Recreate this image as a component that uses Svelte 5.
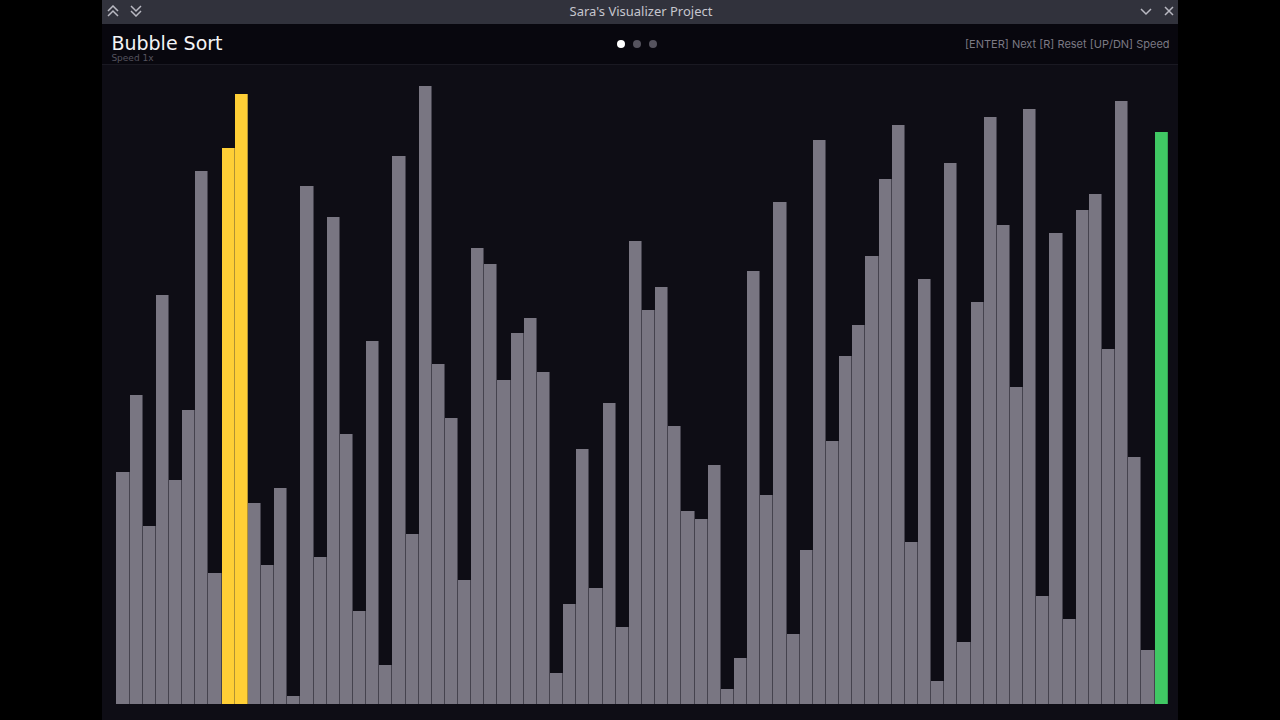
<script lang="ts">
  type BarState = 'idle' | 'compare' | 'sorted';

  const algorithm = 'Bubble Sort';
  const pages = 3;
  const minSpeed = 1;
  const maxSpeed = 16;

  let page = $state(0);
  let speed = $state(1);

  // Current order of the array, values 1..80
  const values = [
    30, 40, 23, 53, 29, 38, 69, 17, 72, 79, 26, 18, 28, 1, 67, 19,
    63, 35, 12, 47, 5, 71, 22, 80, 44, 37, 16, 59, 57, 42, 48, 50,
    43, 4, 13, 33, 15, 39, 10, 60, 51, 54, 36, 25, 24, 31, 2, 6,
    56, 27, 65, 9, 20, 73, 34, 45, 49, 58, 68, 75, 21, 55, 3, 70,
    8, 52, 76, 62, 41, 77, 14, 61, 11, 64, 66, 46, 78, 32, 7, 74,
  ];
  const max = Math.max(...values);

  // Indices being compared and start of the sorted tail
  const comparing = [8, 9];
  const sortedFrom = 79;

  function barState(i: number): BarState {
    if (comparing.includes(i)) return 'compare';
    if (i >= sortedFrom) return 'sorted';
    return 'idle';
  }

  function handleKey(e: KeyboardEvent) {
    if (e.key === 'ArrowUp') speed = Math.min(maxSpeed, speed * 2);
    if (e.key === 'ArrowDown') speed = Math.max(minSpeed, speed / 2);
  }
</script>

<svelte:window onkeydown={handleKey} />

<div class="window">
  <div class="titlebar">
    <div class="controls">
      <button aria-label="Keep above">
        <svg viewBox="0 0 12 12"><path d="M1 6 L6 1 L11 6 M1 11 L6 6 L11 11" /></svg>
      </button>
      <button aria-label="Keep below">
        <svg viewBox="0 0 12 12"><path d="M1 1 L6 6 L11 1 M1 6 L6 11 L11 6" /></svg>
      </button>
    </div>
    <span class="window-title">Sara's Visualizer Project</span>
    <div class="controls right">
      <button aria-label="Minimize">
        <svg viewBox="0 0 12 12"><path d="M1 4 L6 9 L11 4" /></svg>
      </button>
      <button aria-label="Close">
        <svg viewBox="0 0 12 12"><path d="M2 2 L10 10 M10 2 L2 10" /></svg>
      </button>
    </div>
  </div>

  <header>
    <div class="info">
      <h1>{algorithm}</h1>
      <p class="speed">Speed {speed}x</p>
    </div>
    <div class="dots">
      {#each Array(pages) as _, i}
        <span class="dot" class:active={i === page}></span>
      {/each}
    </div>
    <p class="hints">[ENTER] Next [R] Reset [UP/DN] Speed</p>
  </header>

  <main>
    <div class="bars" role="img" aria-label="Array values">
      {#each values as value, i}
        <div class="bar {barState(i)}" style="height: {(value / max) * 100}%"></div>
      {/each}
    </div>
  </main>
</div>

<style>
  :global(body) {
    background: #000;
  }

  .window {
    width: 84%;
    min-height: 100vh;
    margin: 0 auto;
    display: flex;
    flex-direction: column;
    background: #0e0d15;
    font-family: 'DejaVu Sans', sans-serif;
  }

  .titlebar {
    display: grid;
    grid-template-columns: 1fr auto 1fr;
    align-items: center;
    height: 24px;
    padding: 0 3px 2px 5px;
    box-sizing: border-box;
    background: #31323c;
  }

  .window-title {
    font-family: 'Noto Sans', sans-serif;
    font-size: 13px;
    line-height: 16px;
    color: #c6c6ce;
  }

  .controls {
    display: flex;
    gap: 11px;
  }

  .controls.right {
    justify-content: flex-end;
  }

  button {
    display: flex;
    padding: 0;
    border: 0;
    background: none;
    cursor: pointer;
  }

  button svg {
    width: 12px;
    height: 12px;
    fill: none;
    stroke: #b9b9c2;
    stroke-width: 1.5;
  }

  header {
    display: grid;
    grid-template-columns: 1fr auto 1fr;
    align-items: center;
    height: 41px;
    padding: 0 8px 0 9px;
    box-sizing: border-box;
    background: #08070e;
    border-bottom: 1px solid #1a1922;
  }

  h1,
  p {
    margin: 0;
  }

  .info {
    padding-top: 8px;
  }

  h1 {
    font-size: 19px;
    font-weight: 400;
    line-height: 20px;
    color: #f4f4f6;
  }

  .speed {
    font-size: 9px;
    line-height: 10px;
    color: #56545f;
  }

  .dots {
    display: flex;
  }

  .dot {
    width: 8px;
    height: 8px;
    margin-right: 8px;
    border-radius: 50%;
    background: #55535e;
  }

  .dot.active {
    background: #fff;
  }

  .hints {
    text-align: right;
    white-space: nowrap;
    font-family: Inter, sans-serif;
    font-size: 11px;
    line-height: 14px;
    color: #7b7984;
  }

  main {
    flex: 1;
    display: flex;
    padding: 21px 10px 16px 14px;
  }

  .bars {
    flex: 1;
    display: flex;
    align-items: flex-end;
  }

  .bar {
    flex: 1;
    box-sizing: border-box;
    border-right: 1px solid #45434e;
    background: #797682;
  }

  .bar.compare {
    background: #ffcf36;
    border-color: #b19234;
  }

  .bar.sorted {
    background: #40c864;
    border-color: #34a455;
  }
</style>
